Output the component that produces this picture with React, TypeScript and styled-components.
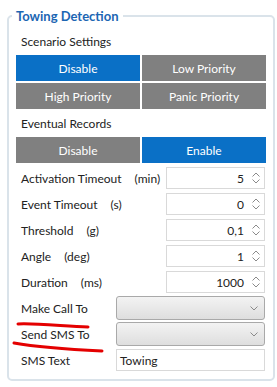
import styled, { createGlobalStyle } from 'styled-components'

const GlobalStyle = createGlobalStyle`
    body {
        margin: 0;
        background: #ffffff;
        font-family: Lato, 'Noto Sans', sans-serif;
        font-size: 12px;
        color: #222;
    }
`

const Page = styled.div`
    padding: 8px 2px 0 7px;
    width: 268px;
`

const Panel = styled.fieldset`
    margin: 0;
    padding: 5px 7px 6px 7px;
    border: 2px solid #dae3ea;
    border-radius: 5px;
    min-width: 0;
`

const Legend = styled.legend`
    margin-left: -4px;
    padding: 0 4px;
    font-size: 13px;
    line-height: 16px;
    font-weight: 700;
    color: #1c66b3;
`

const SectionTitle = styled.div`
    height: 26px;
    line-height: 26px;
    padding-left: 5px;
`

const ButtonGrid = styled.div`
    display: grid;
    grid-template-columns: 1fr 1fr;
    gap: 2px;
    margin-bottom: 2px;
`

const Choice = styled.div<{ $active?: boolean }>`
    height: 26px;
    display: flex;
    align-items: center;
    justify-content: center;
    background: ${(p) => (p.$active ? '#0a70c6' : '#808080')};
    color: #ffffff;
    font-size: 12px;
    user-select: none;
`

const Row = styled.div`
    height: 26px;
    display: flex;
    align-items: center;
    padding: 0 1px 0 5px;
`

const Label = styled.div<{ $width?: number }>`
    position: relative;
    flex: ${(p) => (p.$width ? `0 0 ${p.$width}px` : '1')};
    white-space: nowrap;
`

const Unit = styled.span`
    margin-left: 13px;
`

const NumberBox = styled.div`
    box-sizing: border-box;
    width: 99px;
    height: 22px;
    border: 1px solid #d9d9d9;
    display: flex;
    align-items: center;
    justify-content: flex-end;
    padding-right: 4px;
`

const NumberValue = styled.span`
    margin-right: 8px;
`

const Spinner = styled.div`
    display: flex;
    flex-direction: column;
    gap: 2px;
`

const SelectBox = styled.div`
    box-sizing: border-box;
    flex: 1;
    height: 24px;
    border: 1px solid #a9a9a9;
    border-radius: 3px;
    background: linear-gradient(#f3f3f3, #dedede);
    display: flex;
    align-items: center;
    justify-content: flex-end;
    padding-right: 6px;
`

const TextBox = styled.div`
    box-sizing: border-box;
    flex: 1;
    height: 22px;
    border: 1px solid #d9d9d9;
    display: flex;
    align-items: center;
    padding-left: 3px;
`

const Scribble = styled.svg`
    position: absolute;
    overflow: visible;
    pointer-events: none;
`

const Chevron = ({ up }: { up?: boolean }) => (
    <svg width="8" height="5" viewBox="0 0 8 5">
        <path
            d={up ? 'M0.5 4.5 L4 1 L7.5 4.5' : 'M0.5 0.5 L4 4 L7.5 0.5'}
            fill="none"
            stroke="#8a8a8a"
            strokeWidth="1"
        />
    </svg>
)

const fields = [
    { label: 'Activation Timeout', unit: '(min)', value: '5' },
    { label: 'Event Timeout', unit: '(s)', value: '0' },
    { label: 'Threshold', unit: '(g)', value: '0,1' },
    { label: 'Angle', unit: '(deg)', value: '1' },
    { label: 'Duration', unit: '(ms)', value: '1000' },
]

const App = () => {
    return (
        <>
            <GlobalStyle />
            <Page>
                <Panel>
                    <Legend>Towing Detection</Legend>

                    <SectionTitle>Scenario Settings</SectionTitle>
                    <ButtonGrid>
                        <Choice $active>Disable</Choice>
                        <Choice>Low Priority</Choice>
                        <Choice>High Priority</Choice>
                        <Choice>Panic Priority</Choice>
                    </ButtonGrid>

                    <SectionTitle>Eventual Records</SectionTitle>
                    <ButtonGrid>
                        <Choice>Disable</Choice>
                        <Choice $active>Enable</Choice>
                    </ButtonGrid>

                    {fields.map((f) => (
                        <Row key={f.label}>
                            <Label>
                                {f.label}
                                <Unit>{f.unit}</Unit>
                            </Label>
                            <NumberBox>
                                <NumberValue>{f.value}</NumberValue>
                                <Spinner>
                                    <Chevron up />
                                    <Chevron />
                                </Spinner>
                            </NumberBox>
                        </Row>
                    ))}

                    <Row>
                        <Label $width={95}>
                            Make Call To
                            <Scribble width="80" height="10" style={{ left: -8, top: 19 }}>
                                <path
                                    d="M5 4 C 20 3, 50 6, 75 7"
                                    fill="none"
                                    stroke="#e40000"
                                    strokeWidth="3"
                                    strokeLinecap="round"
                                />
                            </Scribble>
                        </Label>
                        <SelectBox>
                            <Chevron />
                        </SelectBox>
                    </Row>
                    <Row>
                        <Label $width={95}>
                            Send SMS To
                            <Scribble width="96" height="16" style={{ left: -10, top: 11 }}>
                                <path
                                    d="M3 5 C 20 8, 50 11, 91 13"
                                    fill="none"
                                    stroke="#e40000"
                                    strokeWidth="3"
                                    strokeLinecap="round"
                                />
                            </Scribble>
                        </Label>
                        <SelectBox>
                            <Chevron />
                        </SelectBox>
                    </Row>
                    <Row>
                        <Label $width={95}>SMS Text</Label>
                        <TextBox>Towing</TextBox>
                    </Row>
                </Panel>
            </Page>
        </>
    )
}

export default App
